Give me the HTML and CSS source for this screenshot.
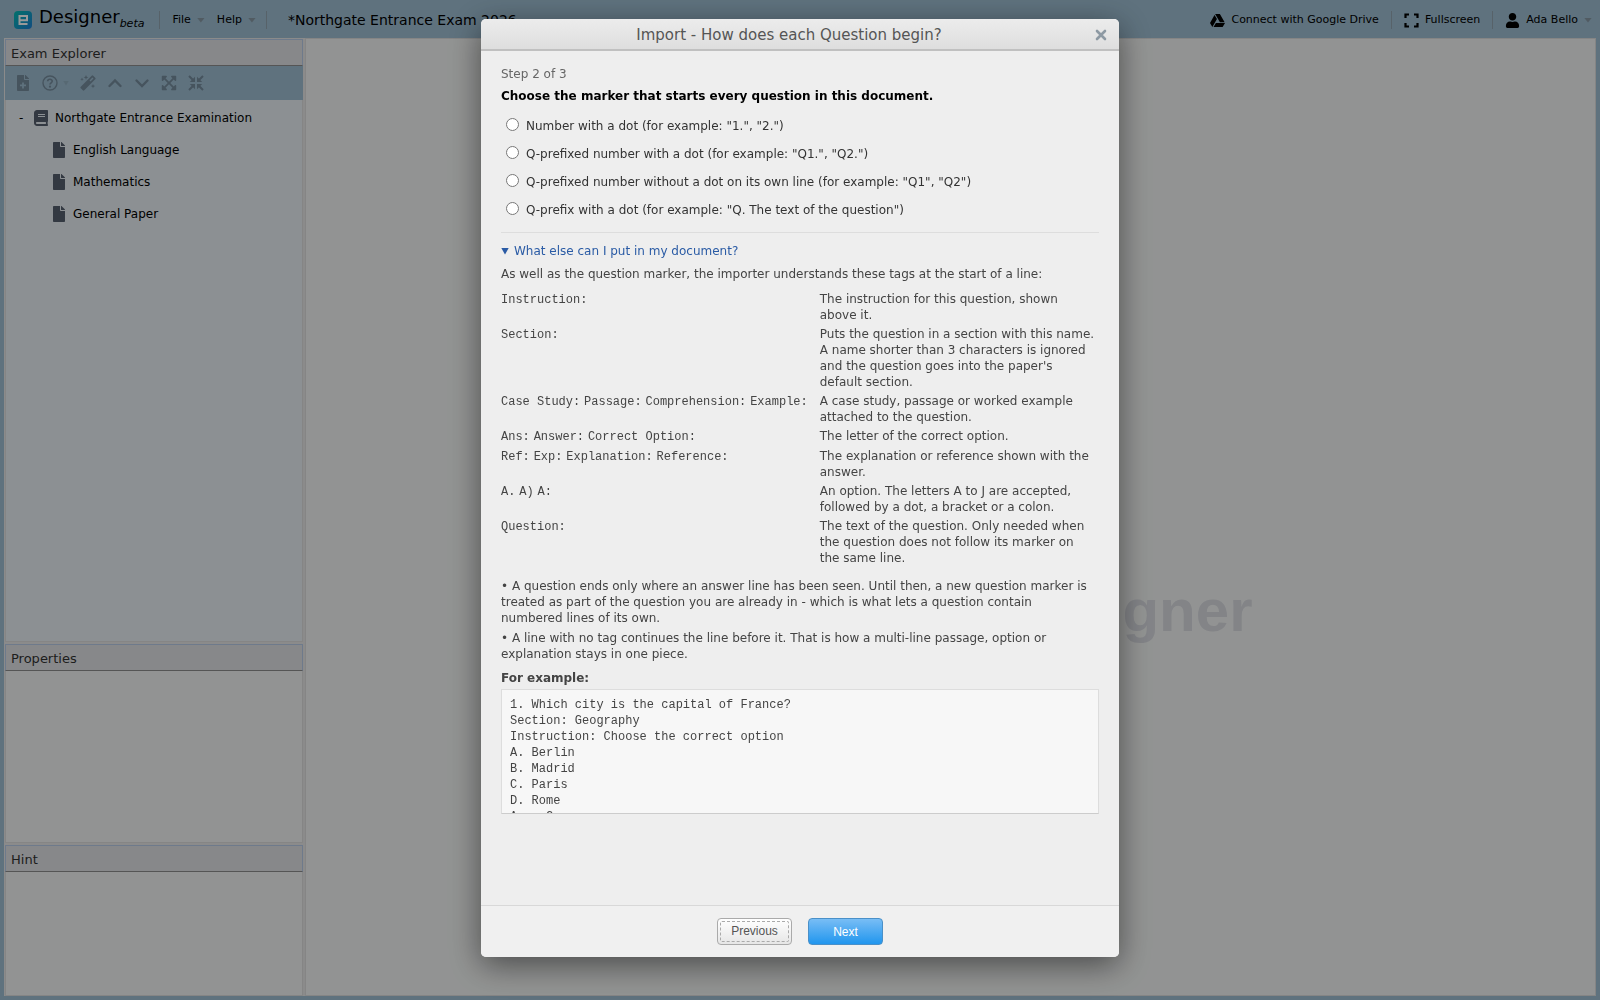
FILE: index.html
```
<!DOCTYPE html>
<html lang="en">
<head>
<meta charset="utf-8">
<title>Designer - Northgate Entrance Exam</title>
<link rel="stylesheet" href="styles.css">
</head>
<body>
<div class="app">
  <header class="topbar">
    <svg class="logo" viewBox="0 0 18 18" aria-hidden="true">
      <defs><linearGradient id="logo-fill" x1="0" y1="0" x2="1" y2="1"><stop offset="0" stop-color="#04bdb4"/><stop offset="1" stop-color="#1f7fd6"/></linearGradient></defs>
      <rect width="18" height="18" rx="4" fill="url(#logo-fill)"/>
      <path d="M13.5 13H5.5V5H13V9.2H6" fill="none" stroke="#fff" stroke-width="2"/>
    </svg>
    <span class="brand">Designer<em>beta</em></span>
    <nav class="menus">
      <button class="menu" type="button">File<span class="caret"></span></button>
      <button class="menu" type="button">Help<span class="caret"></span></button>
    </nav>
    <span class="filename">*Northgate Entrance Exam 2026</span>
    <div class="account">
      <button class="tool" type="button"><svg class="icon15" viewBox="0 0 512 512"><path d="M339 314.9L175.4 32h161.2l163.6 282.9H339zm-137.5 23.6L120.9 480h310.5L512 338.5H201.5zM154.1 67.4L0 338.5 80.6 480 237 208.8 154.1 67.4z"/></svg>Connect with Google Drive</button>
      <button class="tool" type="button"><svg class="icon15" viewBox="0 0 15 15"><path d="M1.5 5V1.500H5M10 1.500h3.500V5M13.500 10v3.500H10M5 13.500H1.500V10" fill="none" stroke="#000" stroke-width="2.200"/></svg>Fullscreen</button>
      <button class="tool" type="button"><svg class="icon15" viewBox="-32 0 512 512"><path d="M224 256c70.700 0 128-57.300 128-128S294.700 0 224 0 96 57.300 96 128s57.300 128 128 128zm89.600 32h-16.700c-22.200 10.200-46.900 16-72.900 16s-50.600-5.800-72.900-16h-16.700C60.200 288 0 348.200 0 422.400V464c0 26.500 21.500 48 48 48h352c26.500 0 48-21.500 48-48v-41.600c0-74.200-60.200-134.400-134.400-134.400z"/></svg>Ada Bello<span class="caret"></span></button>
    </div>
  </header>

  <div class="workspace">
    <aside class="sidebar">
      <section class="panel explorer">
        <h2>Exam Explorer</h2>
        <div class="toolbar">
          <button type="button" aria-label="Add"><svg class="icon16" viewBox="-64 0 512 512"><path fill-rule="evenodd" d="M224 136V0H24C10.700 0 0 10.700 0 24v464c0 13.300 10.700 24 24 24h336c13.300 0 24-10.700 24-24V160H248c-13.200 0-24-10.800-24-24zm160-14.100v6.100H256V0h6.100c6.400 0 12.500 2.500 17 7l97.900 98c4.500 4.500 7 10.600 7 16.900zM164 236h56v68h68v56h-68v68h-56v-68H96v-56h68z"/></svg></button>
          <button type="button" aria-label="Help"><svg class="icon16" viewBox="0 0 16 16"><circle cx="8" cy="8" r="7" fill="none" stroke="#768c9d" stroke-width="1.400"/><path d="M5.700 6.300C5.800 3.500 10.300 3.700 10.200 6.300 10.100 7.800 8 7.900 8 9.600" fill="none" stroke="#768c9d" stroke-width="1.700"/><circle cx="8" cy="11.700" r="1.100"/></svg><span class="caret"></span></button>
          <button type="button" aria-label="Auto format"><svg class="icon16" viewBox="0 0 16 16"><path d="M11.700.800a1 1 0 0 1 1.500 0l2 2a1 1 0 0 1 0 1.500L4.300 15.200a1 1 0 0 1-1.500 0l-2-2a1 1 0 0 1 0-1.500zM12.400 2.500 9.500 5.500l1 1 3-2.900z" fill-rule="evenodd"/><path d="M6 0l.700 1.700 1.700.700-1.700.700L6 4.800l-.700-1.700L3.600 2.400l1.700-.700zM2 2.500l.500 1.200 1.200.500-1.200.500L2 5.900l-.500-1.200L.300 4.200l1.200-.500zM13 9l.600 1.500 1.600.600-1.600.600L13 13.300l-.600-1.600-1.600-.600 1.600-.600z"/></svg></button>
          <button type="button" aria-label="Move up"><svg class="icon16" viewBox="0 0 16 16"><path d="M2.500 11 8 5.500l5.500 5.500" fill="none" stroke="#768c9d" stroke-width="2.400" stroke-linecap="round"/></svg></button>
          <button type="button" aria-label="Move down"><svg class="icon16" viewBox="0 0 16 16"><path d="M2.500 5.500 8 11l5.500-5.500" fill="none" stroke="#768c9d" stroke-width="2.400" stroke-linecap="round"/></svg></button>
          <button type="button" aria-label="Expand all"><svg class="icon16" viewBox="-24 8 496 496"><path d="M448 344v112a24 24 0 0 1-24 24H312c-21 0-32-26-17-41l36-36L224 296 117 403l36 36c15 15 4 41-17 41H24a24 24 0 0 1-24-24V344c0-21 26-32 41-17l36 36L184 256 77 149 41 185c-15 15-41 4-41-17V56a24 24 0 0 1 24-24h112c21 0 32 26 17 41l-36 36L224 216l107-107L295 73c-15-15-4-41 17-41h112a24 24 0 0 1 24 24v112c0 21-26 32-41 17l-36-36L264 256l107 107 36-36c15-15 41-4 41 17z"/></svg></button>
          <button type="button" aria-label="Collapse all"><svg class="icon16" viewBox="0 0 16 16"><path d="M1 1l5 5M15 1l-5 5M1 15l5-5M15 15l-5-5" stroke="#768c9d" stroke-width="2"/><path d="M7 1.800V7H1.800zM9 1.800V7h5.200zM7 14.200V9H1.800zM9 14.200V9h5.200z"/></svg></button>
        </div>
        <ul class="tree">
          <li><span class="node"><span class="twisty">-</span><svg class="icon16" viewBox="-32 0 512 512"><path d="M448 360V24c0-13.300-10.700-24-24-24H96C43 0 0 43 0 96v320c0 53 43 96 96 96h328c13.300 0 24-10.700 24-24v-16c0-7.500-3.500-14.300-8.900-18.700-4.200-15.400-4.200-59.300 0-74.700 5.400-4.300 8.900-11.100 8.900-18.600zM128 134c0-3.300 2.700-6 6-6h212c3.300 0 6 2.700 6 6v20c0 3.300-2.700 6-6 6H134c-3.300 0-6-2.700-6-6v-20zm0 64c0-3.300 2.700-6 6-6h212c3.300 0 6 2.700 6 6v20c0 3.300-2.700 6-6 6H134c-3.300 0-6-2.700-6-6v-20zm253.400 250H96c-17.700 0-32-14.300-32-32 0-17.600 14.400-32 32-32h285.400c-1.900 17.100-1.900 46.900 0 64z"/></svg>Northgate Entrance Examination</span>
            <ul>
              <li class="node"><svg class="icon16" viewBox="-64 0 512 512"><path d="M224 136V0H24C10.700 0 0 10.700 0 24v464c0 13.300 10.700 24 24 24h336c13.300 0 24-10.700 24-24V160H248c-13.200 0-24-10.800-24-24zm160-14.100v6.100H256V0h6.100c6.400 0 12.500 2.500 17 7l97.900 98c4.500 4.500 7 10.600 7 16.900z"/></svg>English Language</li>
              <li class="node"><svg class="icon16" viewBox="-64 0 512 512"><path d="M224 136V0H24C10.700 0 0 10.700 0 24v464c0 13.300 10.700 24 24 24h336c13.300 0 24-10.700 24-24V160H248c-13.200 0-24-10.800-24-24zm160-14.100v6.100H256V0h6.100c6.400 0 12.500 2.500 17 7l97.900 98c4.500 4.500 7 10.600 7 16.900z"/></svg>Mathematics</li>
              <li class="node"><svg class="icon16" viewBox="-64 0 512 512"><path d="M224 136V0H24C10.700 0 0 10.700 0 24v464c0 13.300 10.700 24 24 24h336c13.300 0 24-10.700 24-24V160H248c-13.200 0-24-10.800-24-24zm160-14.100v6.100H256V0h6.100c6.400 0 12.500 2.500 17 7l97.900 98c4.500 4.500 7 10.600 7 16.900z"/></svg>General Paper</li>
            </ul>
          </li>
        </ul>
      </section>
      <section class="panel properties"><h2>Properties</h2></section>
      <section class="panel hint"><h2>Hint</h2></section>
    </aside>
    <main class="canvas"><div class="watermark">Designer</div></main>
  </div>
</div>

<div class="overlay">
  <form class="dialog" role="dialog" aria-modal="true" aria-labelledby="dialog-title">
    <div class="dialog-head">
      <h1 id="dialog-title">Import - How does each Question begin?</h1>
      <button class="close" type="button" aria-label="Close"><svg class="icon16" viewBox="0 0 16 16"><path d="M4 4l8 8M12 4l-8 8" stroke="#8d99a3" stroke-width="2.600" stroke-linecap="round"/></svg></button>
    </div>
    <div class="dialog-body">
      <p class="step">Step 2 of 3</p>
      <fieldset class="markers">
        <legend>Choose the marker that starts every question in this document.</legend>
        <label><input type="radio" name="marker">Number with a dot (for example: "1.", "2.")</label>
        <label><input type="radio" name="marker">Q-prefixed number with a dot (for example: "Q1.", "Q2.")</label>
        <label><input type="radio" name="marker">Q-prefixed number without a dot on its own line (for example: "Q1", "Q2")</label>
        <label><input type="radio" name="marker">Q-prefix with a dot (for example: "Q. The text of the question")</label>
      </fieldset>
      <details class="help" open>
        <summary>What else can I put in my document?</summary>
        <p>As well as the question marker, the importer understands these tags at the start of a line:</p>
        <dl>
          <dt><code>Instruction:</code></dt><dd>The instruction for this question, shown above it.</dd>
          <dt><code>Section:</code></dt><dd>Puts the question in a section with this name. A name shorter than 3 characters is ignored and the question goes into the paper's default section.</dd>
          <dt><code>Case Study:</code> <code>Passage:</code> <code>Comprehension:</code> <code>Example:</code></dt><dd>A case study, passage or worked example attached to the question.</dd>
          <dt><code>Ans:</code> <code>Answer:</code> <code>Correct Option:</code></dt><dd>The letter of the correct option.</dd>
          <dt><code>Ref:</code> <code>Exp:</code> <code>Explanation:</code> <code>Reference:</code></dt><dd>The explanation or reference shown with the answer.</dd>
          <dt><code>A.</code> <code>A)</code> <code>A:</code></dt><dd>An option. The letters A to J are accepted, followed by a dot, a bracket or a colon.</dd>
          <dt><code>Question:</code></dt><dd>The text of the question. Only needed when the question does not follow its marker on the same line.</dd>
        </dl>
        <p class="note">• A question ends only where an answer line has been seen. Until then, a new question marker is treated as part of the question you are already in - which is what lets a question contain numbered lines of its own.</p>
        <p class="note">• A line with no tag continues the line before it. That is how a multi-line passage, option or explanation stays in one piece.</p>
        <h3>For example:</h3>
<pre>1. Which city is the capital of France?
Section: Geography
Instruction: Choose the correct option
A. Berlin
B. Madrid
C. Paris
D. Rome
Ans: C</pre>
      </details>
    </div>
    <div class="dialog-foot">
      <button class="btn previous" type="button"><span>Previous</span></button>
      <button class="btn next" type="button">Next</button>
    </div>
  </form>
</div>
</body>
</html>
```
FILE: styles.css
```
* { box-sizing: border-box; }

body {
  margin: 0;
  font: 12px/16px "DejaVu Sans", Verdana, sans-serif;
  color: #000;
}

h1, h2, h3, p, ul, dl, dd, pre, fieldset { margin: 0; padding: 0; }
ul { list-style: none; }
button { margin: 0; padding: 0; border: 0; background: none; color: inherit; font: inherit; }
svg { flex: none; display: block; }
.icon15 { width: 15px; height: 15px; }
.icon16 { width: 16px; height: 16px; }

.app {
  display: flex;
  flex-direction: column;
  height: 100vh;
  background: #9ebed2;
}

.caret {
  width: 8px;
  height: 5px;
  background: #8798a4;
  clip-path: polygon(0 0, 100% 0, 50% 100%);
}

/* Top bar */
.topbar {
  display: flex;
  align-items: center;
  flex: none;
  height: 38px;
  padding: 2px 8px 0 14px;
  white-space: nowrap;
}
.logo { width: 18px; height: 18px; }
.brand { margin-left: 7px; font-size: 18px; line-height: 24px; }
.brand em { font-size: 11px; vertical-align: -4px; }
.menus {
  display: flex;
  align-items: center;
  gap: 12px;
  height: 18px;
  margin-left: 15px;
  padding: 0 10px 0 12px;
  border: solid #91a4b0;
  border-width: 0 1px;
}
.menu, .tool { display: flex; align-items: center; gap: 6px; font-size: 11px; }
.filename { margin-left: 21px; font-size: 14px; }
.account { display: flex; margin-left: auto; }
.tool { height: 18px; padding: 0 12px; }
.tool + .tool { border-left: 1px solid #91a4b0; }
.tool:last-child { padding: 0 0 0 12px; }

/* Workspace */
.workspace {
  display: grid;
  grid-template-columns: 301px minmax(0, 1fr);
  flex: 1;
  min-height: 0;
  padding: 0 4px 4px;
}
.sidebar { display: flex; flex-direction: column; gap: 2px; background: #e8e8e8; padding: 1px 2px 0 1px; }
.panel { background: #f4f6f5; border: 1px solid #dedede; border-top: 0; }
.panel h2 {
  height: 27px;
  margin: 0 -1px;
  padding: 0 5px;
  border: 1px solid #b8cbe8;
  border-bottom: 1px solid #8e8e8e;
  background: #e2e3e6;
  color: #333;
  font-size: 13px;
  font-weight: 400;
  line-height: 28px;
}
.explorer { flex: 1; background: #eaf0f6; }
.properties { height: 199px; }
.hint { height: 151px; }
.canvas { display: grid; place-items: center; background: #f4f6f5; border: 1px solid #dedede; }
.watermark {
  width: 604px;
  padding-top: 188px;
  color: #dadce2;
  font: bold 60px/72px "Liberation Sans", Arial, sans-serif;
  text-align: right;
}

.toolbar {
  display: flex;
  align-items: center;
  gap: 11px;
  height: 34px;
  margin: 0 -1px;
  padding: 0 10px;
  background: #9ebed2;
  fill: #768c9d;
}
.toolbar button { display: flex; align-items: center; gap: 5px; }
.toolbar .caret { width: 6px; background: #92afc0; }

.tree { padding-top: 2px; }
.node { display: flex; align-items: center; height: 32px; gap: 6px; }
.tree ul { padding-left: 45px; }
.tree svg { fill: #56606e; }
.twisty { width: 8px; margin-left: 13px; }

/* Import dialog */
.overlay {
  position: fixed;
  inset: 0;
  display: flex;
  justify-content: center;
  padding: 19px 16px 43px;
  background: rgba(0, 0, 0, .4);
}
.dialog {
  display: flex;
  flex-direction: column;
  width: 638px;
  border-radius: 5px;
  background: #eee;
  box-shadow: 0 8px 32px rgba(0, 0, 0, .5);
  color: #444;
  overflow: hidden;
}
.dialog-head {
  display: flex;
  align-items: center;
  flex: none;
  height: 32px;
  padding: 1px 10px 0 4px;
  border-bottom: 2px solid #c0c0c0;
  background: linear-gradient(#ececec, #dedede);
}
.dialog-head h1 { flex: 1; color: #555; font-size: 15px; font-weight: 400; line-height: 20px; text-align: center; }
.dialog-body { flex: 1; min-height: 0; padding: 15px 20px 0; overflow: hidden; }
.step { color: #666; }
.markers { border: 0; border-bottom: 1px solid #ddd; padding-bottom: 8px; }
.markers legend { padding: 6px 0 8px; color: #000; font-weight: 700; }
.markers label { display: flex; align-items: center; gap: 7px; height: 28px; padding-left: 5px; color: #333; }
.markers input { width: 13px; height: 13px; margin: 0 0 4px; }

.help summary { display: flex; align-items: center; gap: 5px; margin: 10px 0 7px; color: #2a5ba5; list-style: none; }
.help summary::before { content: ""; width: 8px; height: 7px; background: #2a5ba5; clip-path: polygon(0 0, 100% 0, 50% 100%); }
.help dl { display: grid; grid-template-columns: max-content 1fr; gap: 3px 12px; margin: 9px 0 12px; }
.help dd { padding-right: 3px; }
.help code, .help pre { font: 12px/16px "Liberation Mono", "Courier New", monospace; }
.note { margin-bottom: 4px; padding-right: 4px; }
.help h3 { margin-top: 8px; font-size: 12px; line-height: 16px; }
.help pre {
  max-height: 125px;
  margin-top: 3px;
  padding: 7px 8px;
  border: 1px solid #ddd;
  border-bottom-color: #ccc;
  background: #f7f7f7;
  overflow: hidden;
}

.dialog-foot {
  display: flex;
  justify-content: center;
  gap: 16px;
  flex: none;
  padding: 12px;
  border-top: 1px solid #d8d8d8;
  background: #f0f0f0;
}
.btn {
  width: 75px;
  height: 27px;
  border: 1px solid #aaa;
  border-radius: 4px;
  font: 12px/20px "Liberation Sans", Arial, sans-serif;
}
.previous { padding: 2px; background: linear-gradient(#fff, #e6e6e6); color: #555; }
.previous span { display: block; border: 1px dashed #aaa; border-radius: 2px; line-height: 19px; }
.next { border-color: #4a90c8; background: linear-gradient(#78bdf5, #2196ee); color: #fff; }
```
